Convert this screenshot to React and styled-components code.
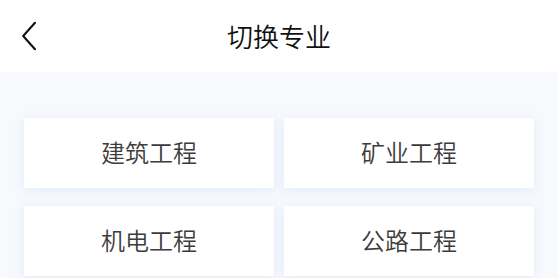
import React from "react";
import styled, { createGlobalStyle } from "styled-components";

const Global = createGlobalStyle`
  html, body { margin: 0; padding: 0; }
  body {
    background: #f7f9fd;
    font-family: "Noto Sans CJK SC", "Noto Sans", sans-serif;
  }
`;

const Page = styled.div`
  width: 558px;
  min-height: 278px;
  background: #f7f9fd;
`;

const Header = styled.header`
  height: 72px;
  background: #ffffff;
  display: grid;
  grid-template-columns: 1fr auto 1fr;
  align-items: center;
`;

const BackButton = styled.button`
  justify-self: start;
  margin-left: 21px;
  padding: 0;
  border: 0;
  background: none;
  display: flex;
  align-items: center;
  cursor: pointer;
`;

const Title = styled.h1`
  margin: 0;
  padding-bottom: 1px;
  font-size: 26px;
  font-weight: 350;
  color: #111111;
  line-height: 1;
`;

const Grid = styled.div`
  display: grid;
  grid-template-columns: 1fr 1fr;
  gap: 18px 10px;
  padding: 46px 24px 0 24px;
`;

const Card = styled.div`
  height: 70px;
  padding-bottom: 3px;
  box-sizing: border-box;
  background: #ffffff;
  box-shadow: 0 2px 10px rgba(190, 210, 240, 0.35);
  display: flex;
  align-items: center;
  justify-content: center;
  font-size: 24px;
  font-weight: 350;
  color: #3c3c3c;
  line-height: 1;
`;

const Chevron = () => (
  <svg width="16" height="30" viewBox="0 0 16 30" fill="none">
    <path d="M14 1.8 L2.2 15 L14 28.2" stroke="#111" strokeWidth="2.1" strokeLinecap="round" strokeLinejoin="round" />
  </svg>
);

const majors = ["建筑工程", "矿业工程", "机电工程", "公路工程"];

export default function App() {
  return (
    <Page>
      <Global />
      <Header>
        <BackButton aria-label="返回">
          <Chevron />
        </BackButton>
        <Title>切换专业</Title>
        <span />
      </Header>
      <Grid>
        {majors.map((m) => (
          <Card key={m}>{m}</Card>
        ))}
      </Grid>
    </Page>
  );
}
